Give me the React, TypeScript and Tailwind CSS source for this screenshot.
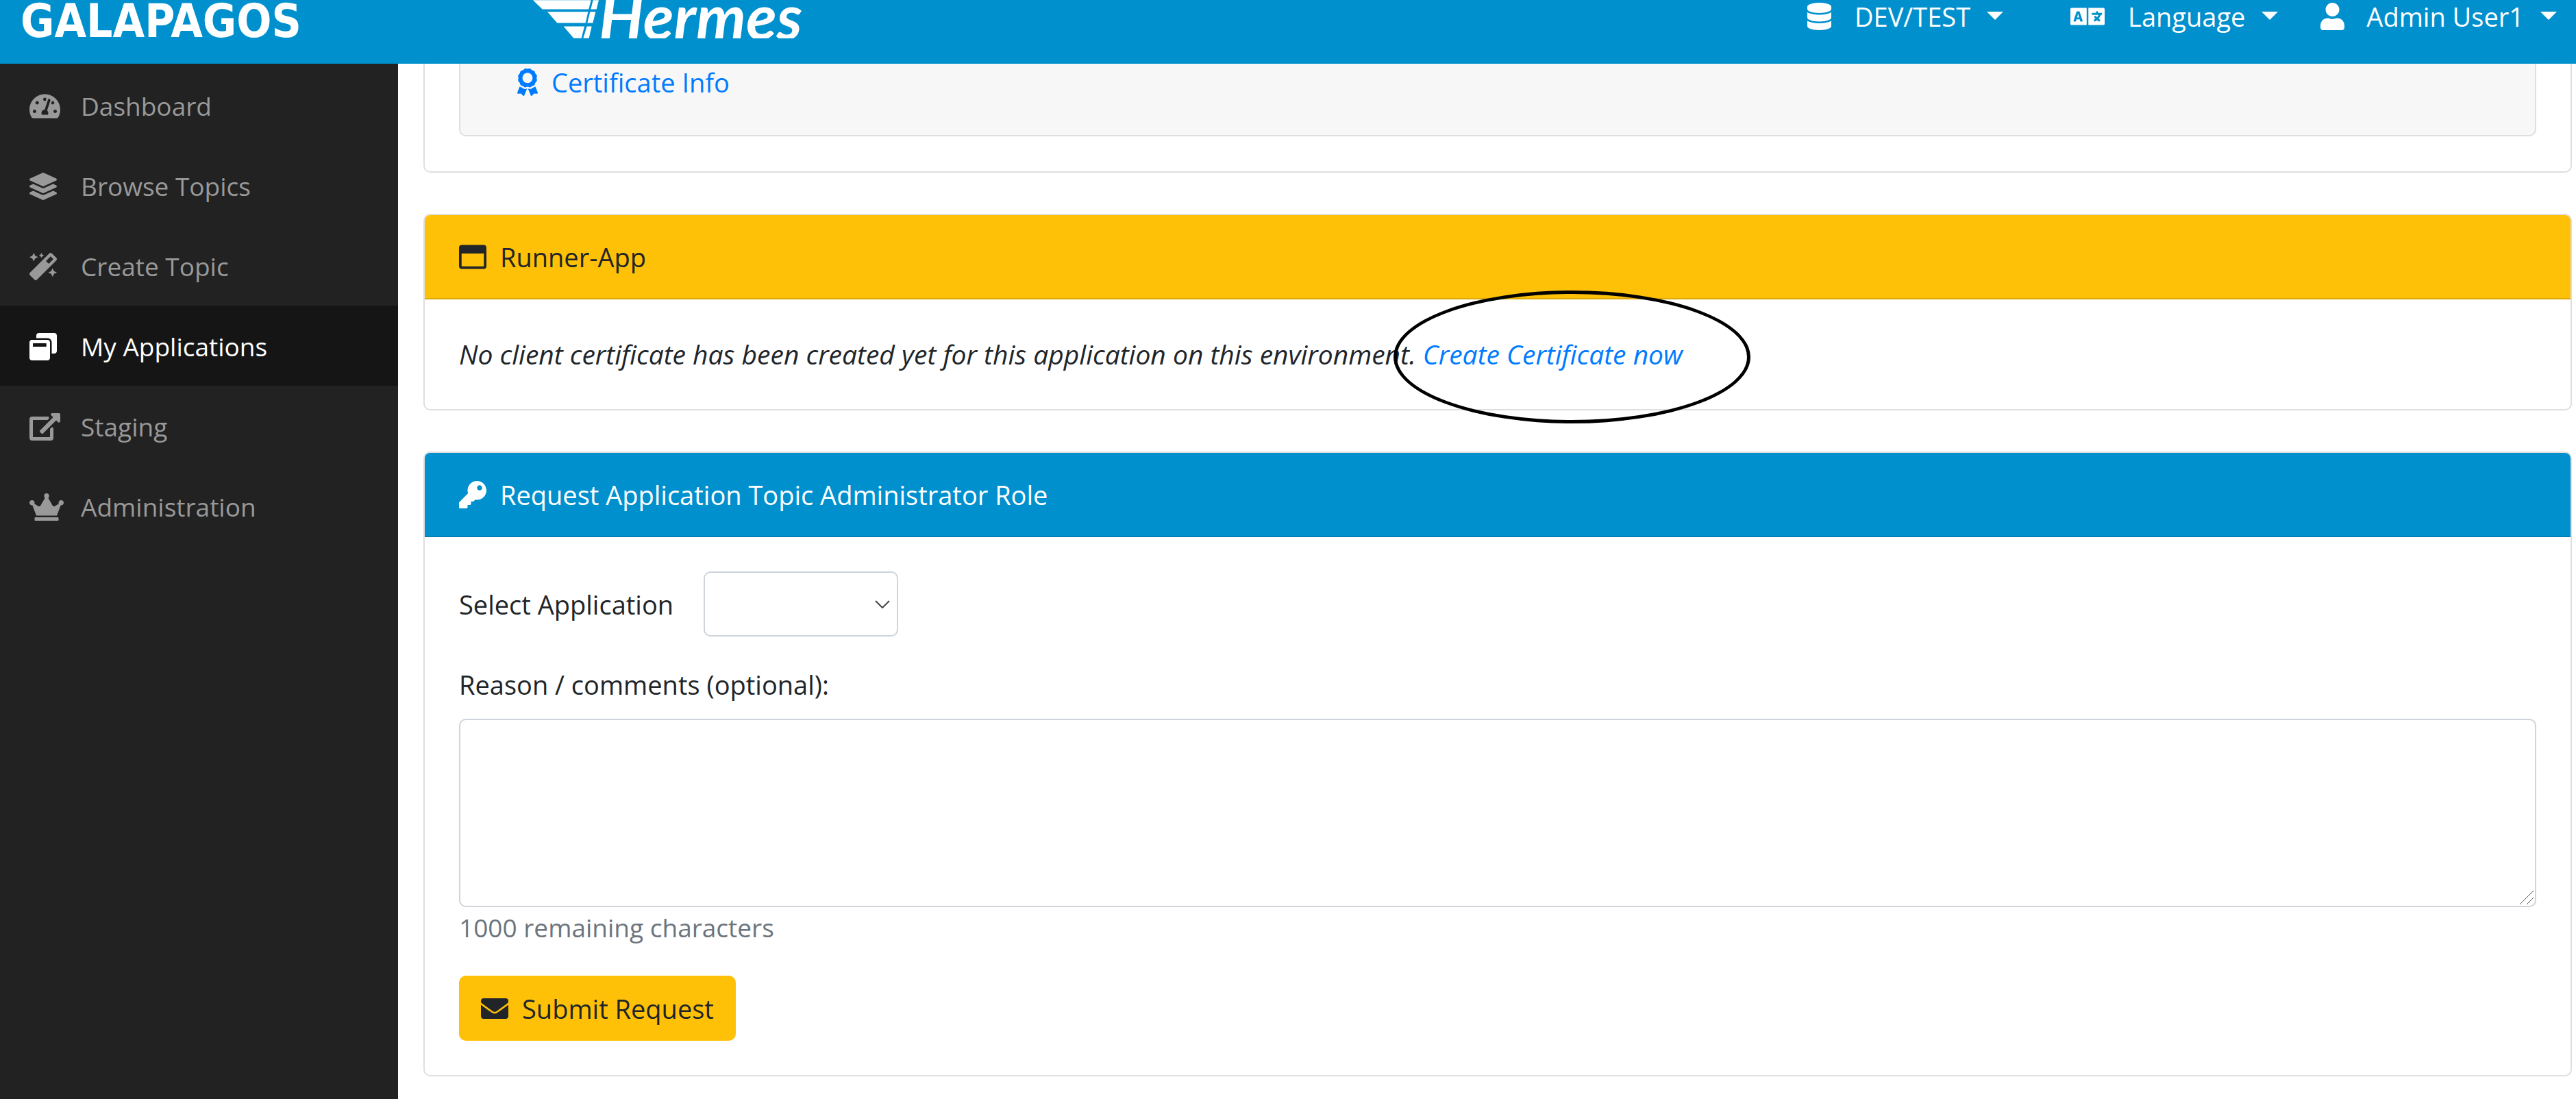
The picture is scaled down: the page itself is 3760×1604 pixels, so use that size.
import type { ReactNode } from "react";
import {
  FaAward,
  FaCrown,
  FaDatabase,
  FaEnvelope,
  FaKey,
  FaLanguage,
  FaLayerGroup,
  FaMagic,
  FaRegWindowMaximize,
  FaTachometerAlt,
  FaUser,
  FaWindowRestore,
} from "react-icons/fa";

function ExternalLinkIcon({ className }: { className?: string }) {
  return (
    <svg viewBox="0 0 576 512" fill="currentColor" className={className} aria-hidden="true">
      <path d="M576 24v127.984c0 21.461-25.96 31.98-40.971 16.971l-35.707-35.709-243.523 243.523c-9.373 9.373-24.568 9.373-33.941 0l-22.627-22.627c-9.373-9.373-9.373-24.569 0-33.941L442.756 76.676l-35.703-35.705C391.982 25.9 402.656 0 424.024 0H552c13.255 0 24 10.745 24 24zM407.029 270.794l-16 16A23.999 23.999 0 0 0 384 303.765V448H64V128h264a24.003 24.003 0 0 0 16.97-7.029l16-16C376.089 89.851 365.381 64 344 64H48C21.49 64 0 85.49 0 112v352c0 26.51 21.49 48 48 48h352c26.51 0 48-21.49 48-48V287.764c0-21.382-25.852-32.09-40.971-16.97z" />
    </svg>
  );
}

function WingMark() {
  return (
    <svg viewBox="0 0 288 167" fill="currentColor" className="h-14 w-24" aria-hidden="true">
      <path d="M0 0H254L244 40H41zM263 0H288L278 40H253zM63 51H241L230 100H106zM250 51H274L262 100H238zM134 115H225L212 167H178zM236 115H257L245 167H220z" />
    </svg>
  );
}

function Caret() {
  return (
    <svg viewBox="0 0 24 12" fill="currentColor" className="mb-0.5 h-3 w-6" aria-hidden="true">
      <path d="M0 0H24L12 12z" />
    </svg>
  );
}

function HeaderMenu({ icon, label }: { icon: ReactNode; label: string }) {
  return (
    <button type="button" className="flex h-12 items-center whitespace-nowrap">
      {icon}
      <span className="mr-6">{label}</span>
      <Caret />
    </button>
  );
}

const navItems = [
  { label: "Dashboard", icon: <FaTachometerAlt className="h-10 w-[45px]" /> },
  { label: "Browse Topics", icon: <FaLayerGroup className="size-10" /> },
  { label: "Create Topic", icon: <FaMagic className="size-10" /> },
  { label: "My Applications", icon: <FaWindowRestore className="size-10" />, active: true },
  { label: "Staging", icon: <ExternalLinkIcon className="h-10 w-[45px]" /> },
  { label: "Administration", icon: <FaCrown className="h-10 w-[50px]" /> },
];

function Sidebar() {
  return (
    <nav className="w-[581px] shrink-0 bg-[#222222] text-[37px] leading-[60px]">
      <ul className="pt-0.5">
        {navItems.map((item) => (
          <li key={item.label}>
            <a
              href="#"
              className={
                item.active
                  ? "flex items-center bg-[#151515] pt-[30px] pb-[27px] pl-[43px] text-white"
                  : "flex items-center pt-[30px] pb-[27px] pl-[43px] text-[#999999]"
              }
            >
              <span className="w-[75px]">{item.icon}</span>
              {item.label}
            </a>
          </li>
        ))}
      </ul>
    </nav>
  );
}

function Card({ header, headerClass, children }: { header: ReactNode; headerClass: string; children: ReactNode }) {
  return (
    <section className="rounded-[10px] border-2 border-[#dfdfdf] bg-white">
      <h2 className={headerClass}>{header}</h2>
      <div className="p-[50px]">{children}</div>
    </section>
  );
}

export default function App() {
  return (
    <div className="flex min-h-screen flex-col bg-white font-['Open_Sans',sans-serif] text-[38px] leading-[60px] text-[#212529]">
      <header className="flex h-[93px] shrink-0 items-start justify-between bg-[#0190ce] pr-7 pl-[30px] text-white">
        <div className="flex items-start">
          <a href="#" className="w-[748px] font-['DejaVu_Sans_Condensed',sans-serif] text-[67px] leading-[62px] font-bold">
            GALAPAGOS
          </a>
          <a href="#" className="flex h-14 items-start overflow-hidden">
            <WingMark />
            <span className="-mt-[7px] pr-2 font-['Lato',sans-serif] text-[92px] leading-[60px] font-bold italic">Hermes</span>
          </a>
        </div>
        <div className="flex">
          <HeaderMenu icon={<FaDatabase className="mr-[34px] h-10 w-[35px]" />} label="DEV/TEST" />
          <div className="ml-[98px]">
            <HeaderMenu icon={<FaLanguage className="mr-[34px] h-10 w-[50px]" />} label="Language" />
          </div>
          <div className="ml-[62px]">
            <HeaderMenu icon={<FaUser className="mr-[32px] h-10 w-[35px]" />} label="Admin User1" />
          </div>
        </div>
      </header>

      <div className="flex grow">
        <Sidebar />
        <main className="flex min-w-0 grow flex-col gap-[60px] pr-1.5 pb-8 pl-[37px]">
          <section className="rounded-b-[10px] border-2 border-t-0 border-[#dfdfdf] px-[50px] pb-[51px]">
            <div className="rounded-b-[10px] border-2 border-t-0 border-[#dfdfdf] bg-[#f7f7f7] px-[83px] pb-[50px]">
              <a href="#" className="flex items-center gap-5 leading-[54px] text-[#007bff]">
                <FaAward className="h-10 w-[30px]" />
                Certificate Info
              </a>
            </div>
          </section>

          <Card
            headerClass="flex items-center gap-5 rounded-t-lg border-b-2 border-[#e0aa07] bg-[#ffc107] px-[50px] pt-[31px] pb-[30px]"
            header={
              <>
                <FaRegWindowMaximize className="size-10" />
                Runner-App
              </>
            }
          >
            <p className="text-[39px] italic">
              No client certificate has been created yet for this application on this environment.{" "}
              <a href="#" className="relative whitespace-nowrap text-[#007bff]">
                Create Certificate now
                <span className="pointer-events-none absolute -top-[66px] -right-[99px] -bottom-[75px] -left-[43px] rounded-[50%] border-[5px] border-black" />
              </a>
            </p>
          </Card>

          <Card
            headerClass="flex items-center gap-5 rounded-t-lg border-b-2 border-[#0180b7] bg-[#0190ce] px-[50px] pt-[31px] pb-[30px] text-white"
            header={
              <>
                <FaKey className="size-10" />
                Request Application Topic Administrator Role
              </>
            }
          >
            <form className="flex flex-col items-start">
              <div className="mb-10 flex items-center">
                <label htmlFor="application" className="mr-11">
                  Select Application
                </label>
                <span className="relative">
                  <select
                    id="application"
                    className="block h-[95px] w-[284px] appearance-none rounded-[10px] border-2 border-[#ced4da] bg-white"
                  />
                  <svg
                    viewBox="0 0 22 12"
                    className="pointer-events-none absolute top-[42px] right-3 h-3 w-[22px] fill-none stroke-[#444444] stroke-2"
                    aria-hidden="true"
                  >
                    <path d="M1 1L11 11L21 1" />
                  </svg>
                </span>
              </div>
              <label htmlFor="reason" className="mb-5">
                Reason / comments (optional):
              </label>
              <div className="relative w-full">
                <textarea
                  id="reason"
                  className="block h-[275px] w-full resize-none rounded-[10px] border-2 border-[#ced4da] bg-white px-8 py-4"
                />
                <svg
                  viewBox="0 0 20 20"
                  className="pointer-events-none absolute right-1 bottom-1 size-5 fill-none stroke-[#555555]"
                  aria-hidden="true"
                >
                  <path d="M0 20L20 0M10 20L20 10" />
                </svg>
              </div>
              <small className="mb-10 text-[37px] text-[#6c757d]">1000 remaining characters</small>
              <button type="submit" className="flex h-[95px] items-center gap-5 rounded-[10px] bg-[#ffc107] px-8">
                <FaEnvelope className="size-10" />
                Submit Request
              </button>
            </form>
          </Card>
        </main>
      </div>
    </div>
  );
}
